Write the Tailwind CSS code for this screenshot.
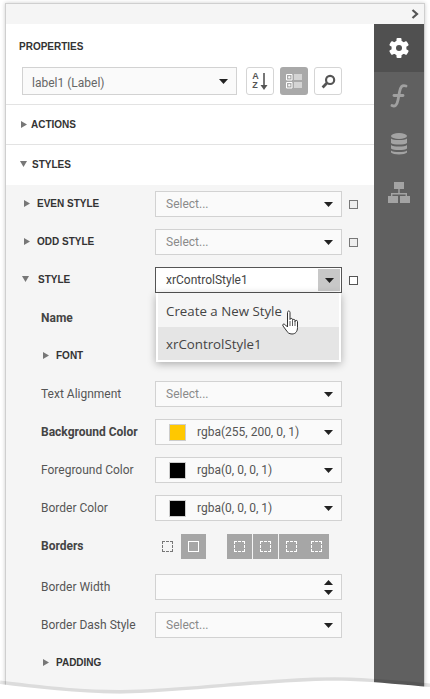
<!DOCTYPE html>
<html lang="en">
<head>
    <meta charset="UTF-8">
    <meta name="viewport" content="width=device-width, initial-scale=1.0">
    <title>Properties</title>
    <script src="https://cdn.jsdelivr.net/npm/@tailwindcss/browser@4"></script>
</head>
<body class="bg-white">
<div class="relative w-[430px] h-[699px] overflow-hidden bg-white font-['Roboto',sans-serif] text-[12px] text-[#555]">
    <div class="ml-[5px] mt-[3px] w-[420px] h-[690px] border border-[#cfcfcf] shadow-[0_0_4px_rgba(0,0,0,0.2)] bg-white">
        <!-- top bar -->
        <div class="h-[20px] bg-[#f5f5f5] flex items-center justify-end pr-[4px]">
            <svg width="10" height="10" viewBox="0 0 10 10"><path d="M2.5 1 7 5 2.5 9" fill="none" stroke="#555" stroke-width="2.2"/></svg>
        </div>
        <div class="flex h-[669px]">
            <div class="w-[368px] relative">
                <!-- properties -->
                <div class="h-[81px] border-b border-[#e3e3e3] pl-[13px]">
                    <div class="h-[43px] pt-[17px] font-['Liberation_Sans',sans-serif] font-bold text-[10px] leading-[12px] text-[#333]">PROPERTIES</div>
                    <div class="flex">
                        <div class="ml-[3px] w-[215px] h-[28px] border border-[#d2d2d2] bg-[#fafafa] flex items-center justify-between pl-[9px] pr-[8px]">
                            <span class="text-[12px] text-[#666] pt-[3px]">label1 (Label)</span>
                            <svg width="9" height="5" viewBox="0 0 9 5"><path d="M0 0h9L4.5 5z" fill="#222"/></svg>
                        </div>
                        <div class="ml-[9px] w-[28px] h-[28px] rounded-[3px] border border-[#d5d5d5] bg-white flex items-center justify-center gap-px">
                            <div class="flex flex-col font-['Liberation_Sans',sans-serif] font-bold text-[9px] leading-[9px] text-[#555]"><span>A</span><span>Z</span></div>
                            <svg width="8" height="19" viewBox="0 0 8 19"><path d="M4 1v15" stroke="#555" stroke-width="1.6"/><path d="M0.5 13h7L4 18z" fill="#555"/></svg>
                        </div>
                        <div class="ml-[6px] w-[28px] h-[28px] rounded-[3px] bg-[#a9a9a9] flex items-center justify-center">
                            <svg width="16" height="16" viewBox="0 0 16 16" fill="none" stroke="#fff" stroke-width="1"><path d="M.5 1.500h5.500v5.500h-5.500zM.5 9.500h5.500v5.500h-5.500zM2 4.200h2.500M3.200 3v2.500M2 12.200h2.500M3.200 11v2.500M8 2h8M8 4h8M8 6h8M8 10h8M8 12h8M8 14h8"/></svg>
                        </div>
                        <div class="ml-[6px] w-[28px] h-[28px] rounded-[3px] border border-[#d5d5d5] bg-white flex items-center justify-center">
                            <svg width="15" height="15" viewBox="0 0 14 14" fill="none"><circle cx="8.500" cy="5.500" r="3.800" stroke="#555" stroke-width="2"/><path d="M5.500 8.500 1.500 12.500" stroke="#555" stroke-width="2.600"/></svg>
                        </div>
                    </div>
                </div>
                <!-- actions -->
                <div class="h-[40px] border-b border-[#e3e3e3] pl-[15px] flex items-center gap-[4px] font-['Liberation_Sans',sans-serif] font-bold text-[10px] text-[#333]">
                    <svg width="6" height="7" viewBox="0 0 6 7"><path d="M0 0l6 3.500L0 7z" fill="#777"/></svg>
                    <span>ACTIONS</span>
                </div>
                <!-- styles -->
                <div class="h-[40px] pb-[2px] pl-[14px] flex items-center gap-[5px] font-['Liberation_Sans',sans-serif] font-bold text-[10px] text-[#333]">
                    <svg width="7" height="6" viewBox="0 0 7 6"><path d="M0 0h7L3.500 6z" fill="#777"/></svg>
                    <span>STYLES</span>
                </div>

                <div class="bg-[#f5f5f5] h-[508px]">
                    <!-- even style -->
                    <div class="h-[38px] flex items-center">
                        <div class="w-[149px] pb-[2px] pl-[18px] flex items-center gap-[7px] font-['Liberation_Sans',sans-serif] font-bold text-[10px] text-[#333]">
                            <svg width="6" height="7" viewBox="0 0 6 7"><path d="M0 0l6 3.500L0 7z" fill="#777"/></svg>
                            <span>EVEN STYLE</span>
                        </div>
                        <div class="w-[187px] h-[26px] border border-[#d2d2d2] bg-[#fafafa] flex items-center justify-between pl-[10px] pr-[8px]">
                            <span class="text-[#8a8a8a]">Select...</span>
                            <svg width="9" height="5" viewBox="0 0 9 5"><path d="M0 0h9L4.500 5z" fill="#222"/></svg>
                        </div>
                        <div class="ml-[7px] w-[9px] h-[9px] border border-[#777] bg-[#eee]"></div>
                    </div>
                    <!-- odd style -->
                    <div class="h-[38px] flex items-center">
                        <div class="w-[149px] pb-[2px] pl-[18px] flex items-center gap-[7px] font-['Liberation_Sans',sans-serif] font-bold text-[10px] text-[#333]">
                            <svg width="6" height="7" viewBox="0 0 6 7"><path d="M0 0l6 3.500L0 7z" fill="#777"/></svg>
                            <span>ODD STYLE</span>
                        </div>
                        <div class="w-[187px] h-[26px] border border-[#d2d2d2] bg-[#fafafa] flex items-center justify-between pl-[10px] pr-[8px]">
                            <span class="text-[#8a8a8a]">Select...</span>
                            <svg width="9" height="5" viewBox="0 0 9 5"><path d="M0 0h9L4.500 5z" fill="#222"/></svg>
                        </div>
                        <div class="ml-[7px] w-[9px] h-[9px] border border-[#777] bg-[#eee]"></div>
                    </div>
                    <!-- style -->
                    <div class="h-[38px] flex items-center">
                        <div class="w-[149px] pb-[2px] pl-[16px] flex items-center gap-[9px] font-['Liberation_Sans',sans-serif] font-bold text-[10px] text-[#333]">
                            <svg width="7" height="6" viewBox="0 0 7 6"><path d="M0 0h7L3.500 6z" fill="#777"/></svg>
                            <span>STYLE</span>
                        </div>
                        <div class="w-[187px] h-[26px] border border-[#555] bg-white flex items-center justify-between pl-[10px] pr-px">
                            <span class="text-[#444]">xrControlStyle1</span>
                            <div class="w-[22px] h-[22px] bg-[#c8c8c8] flex items-center justify-center">
                                <svg width="9" height="5" viewBox="0 0 9 5"><path d="M0 0h9L4.500 5z" fill="#222"/></svg>
                            </div>
                        </div>
                        <div class="ml-[7px] w-[9px] h-[9px] border border-[#555] bg-white"></div>
                    </div>
                    <div class="h-[38px] flex items-center pl-[35px] font-bold text-[#444]">Name</div>
                    <div class="h-[38px] pb-[2px] flex items-center pl-[37px] gap-[7px] font-['Liberation_Sans',sans-serif] font-bold text-[10px] text-[#333]">
                        <svg width="6" height="7" viewBox="0 0 6 7"><path d="M0 0l6 3.500L0 7z" fill="#777"/></svg>
                        <span>FONT</span>
                    </div>
                    <div class="h-[38px] flex items-center">
                        <div class="w-[149px] pl-[35px]">Text Alignment</div>
                        <div class="w-[187px] h-[26px] border border-[#d2d2d2] bg-[#fafafa] flex items-center justify-between pl-[10px] pr-[8px]">
                            <span class="text-[#8a8a8a]">Select...</span>
                            <svg width="9" height="5" viewBox="0 0 9 5"><path d="M0 0h9L4.500 5z" fill="#222"/></svg>
                        </div>
                    </div>
                    <div class="h-[38px] flex items-center">
                        <div class="w-[149px] pl-[35px] font-bold text-[#444]">Background Color</div>
                        <div class="w-[187px] h-[26px] border border-[#d2d2d2] bg-[#fafafa] flex items-center pl-[13px] pr-[8px]">
                            <div class="w-[17px] h-[17px] border border-[#ccc] bg-[#ffc800]"></div>
                            <span class="ml-[11px] text-[#555]">rgba(255, 200, 0, 1)</span>
                            <svg class="ml-auto" width="9" height="5" viewBox="0 0 9 5"><path d="M0 0h9L4.500 5z" fill="#222"/></svg>
                        </div>
                    </div>
                    <div class="h-[38px] flex items-center">
                        <div class="w-[149px] pl-[35px]">Foreground Color</div>
                        <div class="w-[187px] h-[26px] border border-[#d2d2d2] bg-[#fafafa] flex items-center pl-[13px] pr-[8px]">
                            <div class="w-[17px] h-[17px] border border-[#ccc] bg-black"></div>
                            <span class="ml-[11px] text-[#555]">rgba(0, 0, 0, 1)</span>
                            <svg class="ml-auto" width="9" height="5" viewBox="0 0 9 5"><path d="M0 0h9L4.500 5z" fill="#222"/></svg>
                        </div>
                    </div>
                    <div class="h-[38px] flex items-center">
                        <div class="w-[149px] pl-[35px]">Border Color</div>
                        <div class="w-[187px] h-[26px] border border-[#d2d2d2] bg-[#fafafa] flex items-center pl-[13px] pr-[8px]">
                            <div class="w-[17px] h-[17px] border border-[#ccc] bg-black"></div>
                            <span class="ml-[11px] text-[#555]">rgba(0, 0, 0, 1)</span>
                            <svg class="ml-auto" width="9" height="5" viewBox="0 0 9 5"><path d="M0 0h9L4.500 5z" fill="#222"/></svg>
                        </div>
                    </div>
                    <!-- borders -->
                    <div class="h-[38px] flex items-center">
                        <div class="w-[149px] pl-[35px] font-bold text-[#444]">Borders</div>
                        <div class="w-[25px] h-[25px] flex items-center justify-center">
                            <div class="w-[11px] h-[11px] border border-dashed border-[#777]"></div>
                        </div>
                        <div class="ml-px w-[25px] h-[25px] bg-[#a6a6a6] flex items-center justify-center">
                            <div class="w-[11px] h-[11px] border border-white"></div>
                        </div>
                        <div class="ml-[21px] w-[25px] h-[25px] bg-[#a6a6a6] flex items-center justify-center">
                            <div class="w-[11px] h-[11px] border border-dashed border-white"></div>
                        </div>
                        <div class="ml-px w-[25px] h-[25px] bg-[#a6a6a6] flex items-center justify-center">
                            <div class="w-[11px] h-[11px] border border-dashed border-white"></div>
                        </div>
                        <div class="ml-px w-[25px] h-[25px] bg-[#a6a6a6] flex items-center justify-center">
                            <div class="w-[11px] h-[11px] border border-dashed border-white"></div>
                        </div>
                        <div class="w-[25px] h-[25px] bg-[#a6a6a6] flex items-center justify-center">
                            <div class="w-[11px] h-[11px] border border-dashed border-white"></div>
                        </div>
                    </div>
                    <div class="h-[38px] mt-[3px] flex items-center">
                        <div class="w-[149px] pl-[35px]">Border Width</div>
                        <div class="w-[187px] h-[26px] border border-[#d2d2d2] bg-[#fafafa] flex flex-col items-end justify-center gap-[5px] pr-[8px]">
                            <svg width="9" height="5" viewBox="0 0 9 5"><path d="M0 5h9L4.500 0z" fill="#222"/></svg>
                            <svg width="9" height="5" viewBox="0 0 9 5"><path d="M0 0h9L4.500 5z" fill="#222"/></svg>
                        </div>
                    </div>
                    <div class="h-[38px] flex items-center">
                        <div class="w-[149px] pl-[35px]">Border Dash Style</div>
                        <div class="w-[187px] h-[26px] border border-[#d2d2d2] bg-[#fafafa] flex items-center justify-between pl-[10px] pr-[8px]">
                            <span class="text-[#8a8a8a]">Select...</span>
                            <svg width="9" height="5" viewBox="0 0 9 5"><path d="M0 0h9L4.500 5z" fill="#222"/></svg>
                        </div>
                    </div>
                    <div class="h-[38px] pb-[2px] flex items-center pl-[37px] gap-[7px] font-['Liberation_Sans',sans-serif] font-bold text-[10px] text-[#333]">
                        <svg width="6" height="7" viewBox="0 0 6 7"><path d="M0 0l6 3.500L0 7z" fill="#777"/></svg>
                        <span>PADDING</span>
                    </div>
                </div>

                <!-- dropdown -->
                <div class="absolute left-[150px] top-[269px] w-[185px] bg-white border-2 border-t-0 border-white shadow-[0_2px_8px_rgba(0,0,0,0.3)] font-['Open_Sans',sans-serif] text-[13.3px] text-[#444]">
                    <div class="h-[34px] pt-[3px] flex items-center pl-[8px] bg-[#f5f5f5]">Create a New Style</div>
                    <div class="h-[33px] pt-[2px] flex items-center pl-[8px] bg-[#e5e5e5]">xrControlStyle1</div>
                    <!-- hand cursor -->
                    <svg class="absolute left-[124px] top-[17px]" width="20" height="26" viewBox="0 0 20 26">
                        <path d="M5.500 2.500c0-2 2.500-2 2.500 0v7c0-1.500 2.500-1.500 2.500 0v1c0-1.500 2.500-1.500 2.500 0v1c0-1.500 2.500-1.500 2.500 0v6c0 4-2 6.500-5.500 6.500-3 0-4.500-1.500-6-4l-3-4c-1-2 1-2.500 2.500-1l2 2z" fill="#fff" stroke="#333" stroke-width="1"/>
                        <path d="M8 11v5M10.500 11v5M13 11v5" stroke="#333" stroke-width="0.8"/>
                    </svg>
                </div>
            </div>

            <!-- sidebar -->
            <div class="w-[50px] bg-[#606060] flex flex-col">
                <div class="h-[48px] bg-[#505050] flex items-center justify-center">
                    <svg width="20" height="20" viewBox="0 0 20 20">
                        <g fill="#fff">
                            <rect x="7.500" y="0" width="5" height="20" rx="1"/>
                            <rect x="7.500" y="0" width="5" height="20" rx="1" transform="rotate(60 10 10)"/>
                            <rect x="7.500" y="0" width="5" height="20" rx="1" transform="rotate(120 10 10)"/>
                            <circle cx="10" cy="10" r="7.500"/>
                        </g>
                        <circle cx="10" cy="10" r="3" fill="#505050"/>
                    </svg>
                </div>
                <div class="h-[48px] flex items-center justify-center">
                    <svg width="18" height="24" viewBox="0 0 16 24" fill="none" stroke="#a0a0a0" stroke-width="2.800" stroke-linecap="round"><path d="M15 2C11 0.500 9.500 3 8.500 8L7 16C6 21 4 23 1 21.500"/><path d="M3 11.500h9"/></svg>
                </div>
                <div class="h-[48px] flex items-center justify-center">
                    <svg width="16" height="22" viewBox="0 0 16 22" fill="#a3a3a3"><ellipse cx="8" cy="3" rx="8" ry="3"/><path d="M0 5.500C2 7.500 14 7.500 16 5.500V10C14 12 2 12 0 10zM0 12C2 14 14 14 16 12V15.500C14 17.500 2 17.500 0 15.500zM0 17.500C2 19.500 14 19.500 16 17.500V19.500C14 22 2 22 0 19.500z"/></svg>
                </div>
                <div class="h-[48px] flex items-center justify-center">
                    <svg width="22" height="21" viewBox="0 0 22 21" fill="#a3a3a3"><rect x="6" y="0" width="10" height="7"/><path d="M10.300 7h1.400v4H19v3h-1.400v-1.600H4.400V14H3v-3h7.300z"/><rect x="0" y="14" width="10" height="7"/><rect x="12" y="14" width="10" height="7"/></svg>
                </div>
            </div>
        </div>
    </div>

    <!-- torn bottom edge -->
    <svg class="absolute left-0 top-[670px]" width="430" height="29" viewBox="0 0 430 29">
        <path d="M0 14C40 19 90 25 140 23C210 20 290 9 350 11C380 12 405 15 430 17" fill="none" stroke="#000" stroke-opacity="0.1" stroke-width="5" transform="translate(0 -1)"/>
        <path d="M0 14C40 19 90 25 140 23C210 20 290 9 350 11C380 12 405 15 430 17V29H0z" fill="#fff"/>
    </svg>
</div>
</body>
</html>
